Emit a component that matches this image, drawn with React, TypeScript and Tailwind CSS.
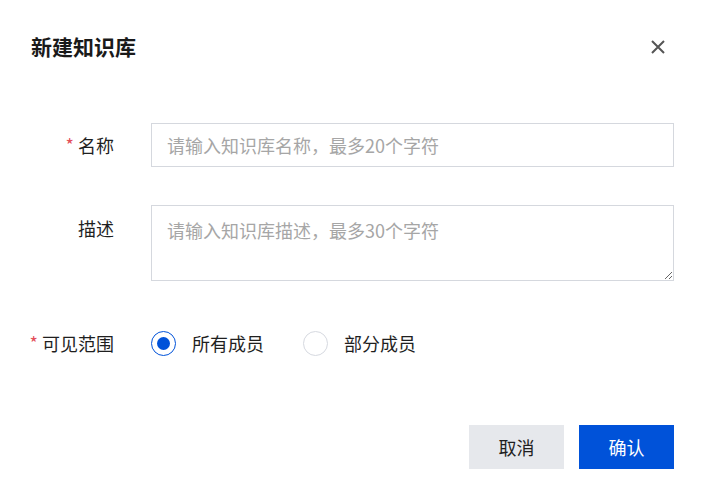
import React, { useState } from "react";

const font = { fontFamily: '"Noto Sans CJK SC", "Noto Sans", sans-serif' };

type Option = { value: string; label: string };

const scopeOptions: Option[] = [
  { value: "all", label: "所有成员" },
  { value: "part", label: "部分成员" },
];

const Radio = ({ checked, label, onClick }: { checked: boolean; label: string; onClick: () => void }) => (
  <button type="button" onClick={onClick} className="flex items-center gap-4 cursor-pointer">
    <span
      className={
        checked
          ? "w-[25px] h-[25px] rounded-full border border-[#0052d9] flex items-center justify-center"
          : "w-[25px] h-[25px] rounded-full border border-[#d6d9e0] flex items-center justify-center"
      }
    >
      {checked && <span className="w-[13px] h-[13px] rounded-full bg-[#0052d9]" />}
    </span>
    <span className="text-[18px] text-[#1f1f1f] leading-[26px]">{label}</span>
  </button>
);

const FieldLabel = ({ text, required }: { text: string; required?: boolean }) => (
  <div className="w-[83px] shrink-0 flex justify-end items-center h-[26px] text-[18px] text-[#1f1f1f] whitespace-nowrap">
    {required && <span className="text-[#e34d59] text-[18px] leading-none mr-[4px] -mt-[3px]">*</span>}
    <span>{text}</span>
  </div>
);

const NewKnowledgeBaseDialog = () => {
  const [scope, setScope] = useState("all");

  return (
    <div className="w-[707px] h-[497px] bg-white pl-[31px] pr-[33px] pt-[32px] flex flex-col" style={font}>
      {/* header */}
      <div className="flex items-center justify-between h-[30px]">
        <h1 className="text-[21px] font-bold text-[#1a1a1a]">新建知识库</h1>
        <button type="button" className="mr-[9px] text-[#555555]">
          <svg width="14" height="14" viewBox="0 0 14 14" fill="none">
            <path d="M1 1L13 13M13 1L1 13" stroke="currentColor" strokeWidth="2" />
          </svg>
        </button>
      </div>

      {/* form */}
      <div className="mt-[61px] flex flex-col">
        <div className="flex items-center h-[44px]">
          <FieldLabel text="名称" required />
          <input
            className="ml-[37px] flex-1 h-[44px] border border-[#d5d8de] px-[15px] text-[18px] outline-none placeholder:text-[#a6a6a6]"
            placeholder="请输入知识库名称，最多20个字符"
          />
        </div>

        <div className="flex items-start mt-[38px]">
          <div className="pt-[10px]">
            <FieldLabel text="描述" />
          </div>
          <textarea
            className="ml-[37px] flex-1 h-[76px] border border-[#d5d8de] px-[15px] pt-[11px] text-[18px] leading-[26px] outline-none placeholder:text-[#a6a6a6]"
            placeholder="请输入知识库描述，最多30个字符"
          />
        </div>

        <div className="flex items-center mt-[49px] h-[26px]">
          <FieldLabel text="可见范围" required />
          <div className="ml-[37px] flex items-center gap-[39px]">
            {scopeOptions.map((o) => (
              <Radio key={o.value} label={o.label} checked={scope === o.value} onClick={() => setScope(o.value)} />
            ))}
          </div>
        </div>
      </div>

      {/* footer */}
      <div className="mt-[69px] flex justify-end gap-[15px]">
        <button type="button" className="w-[95px] h-[44px] bg-[#e6e8ec] text-[18px] text-[#1f1f1f]">
          取消
        </button>
        <button type="button" className="w-[95px] h-[44px] bg-[#0052d9] text-[18px] text-white">
          确认
        </button>
      </div>
    </div>
  );
};

export default function App() {
  return <NewKnowledgeBaseDialog />;
}
